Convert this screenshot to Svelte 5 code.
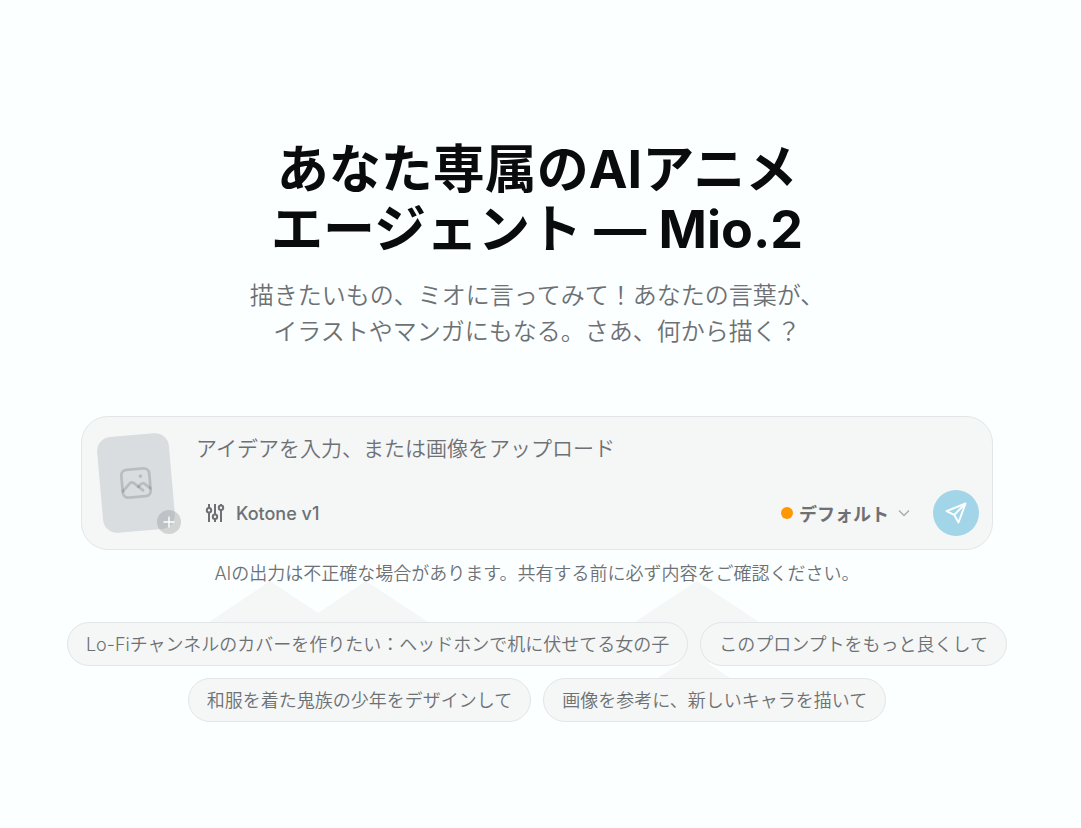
<script>
  let prompt = $state('');

  const rows = [
    [
      'Lo-Fiチャンネルのカバーを作りたい：ヘッドホンで机に伏せてる女の子',
      'このプロンプトをもっと良くして'
    ],
    ['和服を着た鬼族の少年をデザインして', '画像を参考に、新しいキャラを描いて']
  ];
</script>

<main>
  <header>
    <h1>あなた専属のAIアニメ<br />エージェント — Mio.2</h1>
    <p>描きたいもの、ミオに言ってみて！あなたの言葉が、<br />イラストやマンガにもなる。さあ、何から描く？</p>
  </header>

  <form class="composer" onsubmit={(e) => e.preventDefault()}>
    <button class="upload" type="button" aria-label="画像をアップロード">
      <span class="sheet">
        <svg width="36" height="36" viewBox="0 0 36 36" fill="none" stroke="#000" stroke-opacity=".14" stroke-width="2.8" stroke-linecap="round" stroke-linejoin="round">
          <rect x="4" y="4" width="28" height="28" rx="5.5" />
          <path d="M4.500 25l7-7a3 3 0 0 1 4.400 0l8.500 8" />
          <path d="M20 22l2.400-2.300a3 3 0 0 1 4.200 0l5 4.600" />
          <circle cx="23" cy="11.500" r="1.900" fill="#000" fill-opacity=".14" stroke="none" />
        </svg>
      </span>
      <span class="plus">
        <svg width="12" height="12" viewBox="0 0 12 12" stroke="#fff" stroke-width="1.4"><path d="M6 .5v11M.5 6h11" /></svg>
      </span>
    </button>

    <div class="fields">
      <input type="text" bind:value={prompt} aria-label="アイデア" placeholder="アイデアを入力、または画像をアップロード" />
      <div class="tools">
        <button class="model" type="button">
          <svg width="20" height="20" viewBox="0 0 20 20" fill="none" stroke="currentColor" stroke-width="2">
            <path d="M4 1v4M4 9.500V19M10 1v10.500M10 16V19M16 1v1.500M16 7V19" />
            <circle cx="4" cy="7.300" r="2.200" />
            <circle cx="10" cy="13.800" r="2.200" />
            <circle cx="16" cy="4.800" r="2.200" />
          </svg>
          Kotone v1
        </button>
        <button class="mode" type="button">
          <i class="dot"></i>
          デフォルト
          <svg class="chevron" width="12" height="8" viewBox="0 0 12 8" fill="none" stroke="#a9adaf" stroke-width="1.4"><path d="M1 1.500l5 5 5-5" /></svg>
        </button>
        <button class="send" type="submit" aria-label="送信">
          <svg width="24" height="24" viewBox="0 0 24 24" fill="none" stroke="#fff" stroke-width="1.9" stroke-linejoin="round">
            <path d="M21.500 2.500L2.500 10.200l7.700 3.600 4.300 7.700z" />
            <path d="M21.500 2.500L10.200 13.800" />
          </svg>
        </button>
      </div>
    </div>
  </form>

  <p class="notice">AIの出力は不正確な場合があります。共有する前に必ず内容をご確認ください。</p>

  <div class="suggestions">
    <svg class="peaks" width="560" height="100" viewBox="0 0 560 100" fill="#f5f6f6" aria-hidden="true">
      <path d="M0 41L61 0l48 32 48-32 62 41z" />
      <path d="M426 41L488 0l62 41v22h-50v20l21 14h-72l21-14V63h-44z" />
    </svg>
    {#each rows as row}
      <div class="row">
        {#each row as text}
          <button class="chip" type="button">{text}</button>
        {/each}
      </div>
    {/each}
  </div>
</main>

<style>
  :global(body) {
    margin: 0;
    background: #fcffff;
  }

  main {
    box-sizing: border-box;
    min-height: 100vh;
    padding: 140px 66px 100px 59px;
    display: flex;
    flex-direction: column;
    align-items: center;
    font-family: Inter, "Noto Sans CJK JP", sans-serif;
    font-size: 18px;
    font-weight: 350;
    color: #6d7174;
  }

  header {
    text-align: center;
  }

  h1 {
    margin: 0;
    font-size: 52px;
    line-height: 60px;
    font-weight: 700;
    color: #090b0c;
  }

  header p {
    margin: 18px 0 0;
    font-size: 24px;
    line-height: 36px;
  }

  button,
  input {
    font: inherit;
    color: inherit;
    background: none;
    border: 0;
    padding: 0;
  }

  button {
    cursor: pointer;
  }

  .composer {
    box-sizing: border-box;
    width: 100%;
    max-width: 912px;
    margin-top: 66px;
    padding: 13px 13px 13px 18px;
    display: flex;
    gap: 24px;
    background: #f5f6f6;
    border: 1px solid #e2e6e8;
    border-radius: 27px;
  }

  .upload {
    position: relative;
    align-self: center;
    width: 72px;
    flex: none;
  }

  .sheet {
    display: flex;
    align-items: center;
    justify-content: center;
    width: 72px;
    height: 96px;
    border-radius: 14px;
    background: #d9dde0;
    transform: rotate(-5deg);
  }

  .plus {
    position: absolute;
    right: -9px;
    bottom: -3px;
    display: flex;
    align-items: center;
    justify-content: center;
    width: 24px;
    height: 24px;
    border-radius: 50%;
    background: rgba(128, 132, 134, 0.3);
  }

  .fields {
    flex: 1;
    min-width: 0;
    display: flex;
    flex-direction: column;
    justify-content: space-between;
    gap: 24px;
  }

  input {
    width: 100%;
    height: 36px;
    font-size: 21px;
    outline: none;
  }

  input::placeholder {
    color: #6d7174;
    opacity: 1;
  }

  .tools {
    display: flex;
    align-items: center;
  }

  .model,
  .mode {
    display: flex;
    align-items: center;
    font-weight: 500;
  }

  .model {
    gap: 11px;
    margin-left: 9px;
  }

  .mode {
    gap: 6px;
    margin-left: auto;
    font-weight: 700;
  }

  .dot {
    width: 12px;
    height: 12px;
    border-radius: 50%;
    background: #ff9800;
  }

  .chevron {
    margin-left: 3px;
  }

  .send {
    display: flex;
    align-items: center;
    justify-content: center;
    width: 46px;
    height: 46px;
    margin-left: 23px;
    border-radius: 50%;
    background: #a2d5e8;
  }

  .notice {
    position: relative;
    z-index: 1;
    margin: 10px 0 0;
    line-height: 27px;
  }

  .suggestions {
    position: relative;
    margin-top: 35px;
    display: flex;
    flex-direction: column;
    gap: 12px;
  }

  .peaks {
    position: absolute;
    left: 142px;
    top: -41px;
  }

  .row {
    position: relative;
    display: flex;
    justify-content: center;
    gap: 12px;
  }

  .chip {
    box-sizing: border-box;
    height: 44px;
    padding: 0 18px 2px;
    white-space: nowrap;
    background: #f5f6f6;
    border: 1px solid #e2e6e8;
    border-radius: 22px;
  }
</style>
